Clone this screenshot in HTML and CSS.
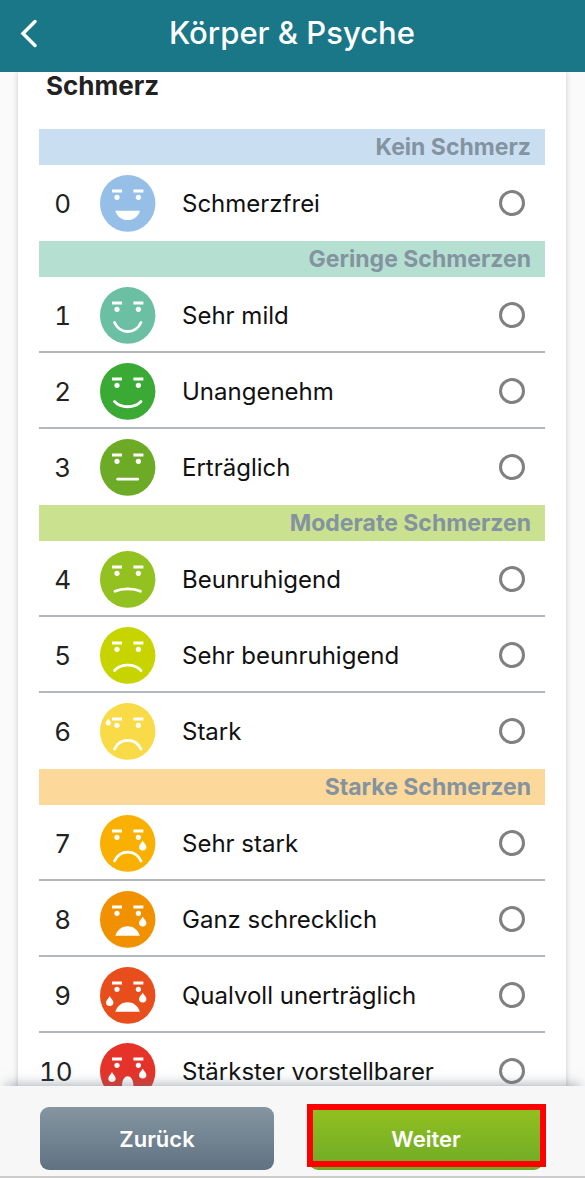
FILE: index.html
```html
<!DOCTYPE html>
<html lang="de">
<head>
	<meta charset="UTF-8"/>
	<title>Körper &amp; Psyche</title>
	<meta name="viewport" content="width=device-width, initial-scale=1.0"/>
	<link rel="stylesheet" href="styles.css">
</head>
<body>
	<!-- shared parts of the faces -->
	<svg class="defs" width="0" height="0" aria-hidden="true">
		<defs>
			<g id="face">
				<ellipse cx="27.7" cy="28.4" rx="27.7" ry="28.4"/>
				<path fill="#fff" d="M12 14.6h10v2.8H12zM33.4 14.6h10v2.8h-10z"/>
				<circle fill="#fff" cx="17" cy="22.3" r="2.6"/>
				<circle fill="#fff" cx="38.4" cy="22.3" r="2.6"/>
			</g>
			<path id="drop" fill="#fff" d="M0 -5C1 -2.6 3.7 -1 3.7 1.5A3.7 3.5 0 0 1 -3.7 1.5C-3.7 -1 -1 -2.6 0 -5Z"/>
		</defs>
	</svg>

	<header class="header">
		<a href="#" class="back" aria-label="Zurück">
			<svg width="20" height="30" viewBox="0 0 20 30"><path d="M17 3.5L5 15.5L17 27.5"/></svg>
		</a>
		<h1>Körper &amp; Psyche</h1>
	</header>

	<main class="content">
		<form class="card" id="pain">
			<h2>Schmerz</h2>

			<section class="group none">
				<h3>Kein Schmerz</h3>
				<label class="row">
					<span class="num">0</span>
					<svg class="face f0" viewBox="0 0 56 57"><use href="#face"/><path class="fill" d="M15.3 35.7H40C38 42 33.5 45 27.7 45S17.3 42 15.3 35.7Z"/></svg>
					<span class="text">Schmerzfrei</span>
					<input type="radio" name="pain" value="0">
				</label>
			</section>

			<section class="group mild">
				<h3>Geringe Schmerzen</h3>
				<label class="row">
					<span class="num">1</span>
					<svg class="face f1" viewBox="0 0 56 57"><use href="#face"/><path class="line" d="M14.5 35.5C20 47.5 35.5 47.5 41 35.5"/></svg>
					<span class="text">Sehr mild</span>
					<input type="radio" name="pain" value="1">
				</label>
				<label class="row">
					<span class="num">2</span>
					<svg class="face f2" viewBox="0 0 56 57"><use href="#face"/><path class="line" d="M14.5 38.5C21 45.5 34.5 45.5 41 38.5"/></svg>
					<span class="text">Unangenehm</span>
					<input type="radio" name="pain" value="2">
				</label>
				<label class="row">
					<span class="num">3</span>
					<svg class="face f3" viewBox="0 0 56 57"><use href="#face"/><path class="line" d="M17.7 40.2H37.7"/></svg>
					<span class="text">Erträglich</span>
					<input type="radio" name="pain" value="3">
				</label>
			</section>

			<section class="group moderate">
				<h3>Moderate Schmerzen</h3>
				<label class="row">
					<span class="num">4</span>
					<svg class="face f4" viewBox="0 0 56 57"><use href="#face"/><path class="line" d="M15 40.2C22 37 33.5 37 40.5 40.2"/></svg>
					<span class="text">Beunruhigend</span>
					<input type="radio" name="pain" value="4">
				</label>
				<label class="row">
					<span class="num">5</span>
					<svg class="face f5" viewBox="0 0 56 57"><use href="#face"/><path class="line" d="M14.5 43.5C21 36.2 34.5 36.2 41 43.5"/></svg>
					<span class="text">Sehr beunruhigend</span>
					<input type="radio" name="pain" value="5">
				</label>
				<label class="row">
					<span class="num">6</span>
					<svg class="face f6" viewBox="0 0 56 57"><use href="#face"/><use href="#drop" transform="translate(8.3 19) scale(.7)"/><path class="line" d="M14.5 46C20 34.5 35.5 34.5 41 46"/></svg>
					<span class="text">Stark</span>
					<input type="radio" name="pain" value="6">
				</label>
			</section>

			<section class="group strong">
				<h3>Starke Schmerzen</h3>
				<label class="row">
					<span class="num">7</span>
					<svg class="face f7" viewBox="0 0 56 57"><use href="#face"/><use href="#drop" x="42.7" y="30.5"/><path class="line" d="M14.5 46C20 34.2 35.5 34.2 41 46"/></svg>
					<span class="text">Sehr stark</span>
					<input type="radio" name="pain" value="7">
				</label>
				<label class="row">
					<span class="num">8</span>
					<svg class="face f8" viewBox="0 0 56 57"><use href="#face"/><use href="#drop" x="42.7" y="30.5"/><path class="fill" d="M15.3 44.8C17.5 38.5 22 35.3 27.6 35.3S37.7 38.5 39.9 44.8Z"/></svg>
					<span class="text">Ganz schrecklich</span>
					<input type="radio" name="pain" value="8">
				</label>
				<label class="row">
					<span class="num">9</span>
					<svg class="face f9" viewBox="0 0 56 57"><use href="#face"/><use href="#drop" x="9.7" y="34"/><use href="#drop" x="42.7" y="30.5"/><path class="fill" d="M15.3 44.8C17.5 38.5 22 35.3 27.6 35.3S37.7 38.5 39.9 44.8Z"/></svg>
					<span class="text">Qualvoll unerträglich</span>
					<input type="radio" name="pain" value="9">
				</label>
				<label class="row">
					<span class="num">10</span>
					<svg class="face f10" viewBox="0 0 56 57"><use href="#face"/><use href="#drop" x="12" y="34"/><use href="#drop" x="42.7" y="30.5"/><ellipse class="fill" cx="27.7" cy="41.5" rx="5.7" ry="8.2"/></svg>
					<span class="text">Stärkster vorstellbarer</span>
					<input type="radio" name="pain" value="10">
				</label>
			</section>
		</form>
	</main>

	<footer class="footer">
		<button type="button" class="btn prev">Zurück</button>
		<button type="submit" form="pain" class="btn next">Weiter</button>
	</footer>
</body>
</html>
```
FILE: styles.css
```css
* {
	margin: 0;
	padding: 0;
	box-sizing: border-box;
}

body {
	display: flex;
	flex-direction: column;
	height: 100vh;
	background-color: #fafafa;
	color: #222;
	font-family: Inter, "Liberation Sans", sans-serif;
	font-size: 24px;
}

.defs {
	position: absolute;
}

.header {
	display: grid;
	grid-template-columns: 40px 1fr 40px;
	align-items: center;
	flex: none;
	height: 72px;
	padding: 0 19px 6px 18px;
	background-color: #1a7787;
	color: #fff;
}
.header h1 {
	font-size: 31px;
	font-weight: 500;
	line-height: 40px;
	text-align: center;
}
.back svg {
	display: block;
	fill: none;
	stroke: #fff;
	stroke-width: 3.5;
	stroke-linecap: round;
}

.content {
	flex: 1;
	min-height: 0;
	padding: 0 19px 0 18px;
	overflow-y: auto;
	scrollbar-width: none;
}
.card {
	padding: 0 21px;
	background-color: #fff;
	box-shadow: 0 0 6px rgba(0, 0, 0, .2);
}
.card h2 {
	padding: 0 7px 29px;
	font-size: 26px;
	font-weight: 700;
	line-height: 28px;
}

.group h3 {
	padding-right: 14px;
	color: #8493a0;
	font-size: 23px;
	font-weight: 700;
	line-height: 36px;
	text-align: right;
}
.none h3 {
	background-color: #cadef2;
}
.mild h3 {
	background-color: #b5dfd1;
}
.moderate h3 {
	background-color: #cae18f;
}
.strong h3 {
	background-color: #fdd89b;
}

.row {
	display: grid;
	grid-template-columns: 32px 56px 1fr 26px;
	align-items: center;
	height: 76px;
	padding: 2px 20px 0 0;
	border-bottom: 2px solid #b3b8bd;
	cursor: pointer;
}
.row:last-child {
	border-bottom-color: transparent;
}
.num {
	font-size: 26px;
	font-variant-numeric: tabular-nums;
	text-align: right;
}
.face {
	width: 56px;
	height: 57px;
	margin-left: 29px;
}
.text {
	margin-left: 55px;
	color: #111;
	white-space: nowrap;
}
.row input {
	appearance: none;
	width: 26px;
	height: 26px;
	border: 3px solid #808080;
	border-radius: 50%;
	background-color: #fff;
}
.row input:checked {
	background-color: #1a7787;
}

.fill {
	fill: #fff;
}
.line {
	fill: none;
	stroke: #fff;
	stroke-width: 2.8;
	stroke-linecap: round;
}
.f0 { fill: #96bfe8; }
.f1 { fill: #6bbfa3; }
.f2 { fill: #3aaa35; }
.f3 { fill: #6dab27; }
.f4 { fill: #93c11f; }
.f5 { fill: #c8d400; }
.f6 { fill: #f9db47; }
.f7 { fill: #f9b000; }
.f8 { fill: #f29100; }
.f9 { fill: #e84e1b; }
.f10 { fill: #e63329; }

.footer {
	position: relative;
	display: flex;
	flex: none;
	gap: 35px;
	height: 92px;
	padding: 21px 42px 6px 40px;
	border-bottom: 2px solid #ccc;
	background-color: #f7f7f7;
	box-shadow: 0 -7px 12px -6px rgba(96, 115, 130, .6);
}
.btn {
	position: relative;
	flex: 1;
	height: 63px;
	border: none;
	border-radius: 9px;
	color: #fff;
	font-family: inherit;
	font-size: 22px;
	font-weight: 600;
	cursor: pointer;
}
.prev {
	background: linear-gradient(#8595a1, #607282);
}
.next {
	background: linear-gradient(#93c01f, #6dab27);
}
/* highlight frame over the next button */
.next::after {
	content: "";
	position: absolute;
	inset: -3px -3px 3px -2px;
	border: 6px solid #f00;
}
```
